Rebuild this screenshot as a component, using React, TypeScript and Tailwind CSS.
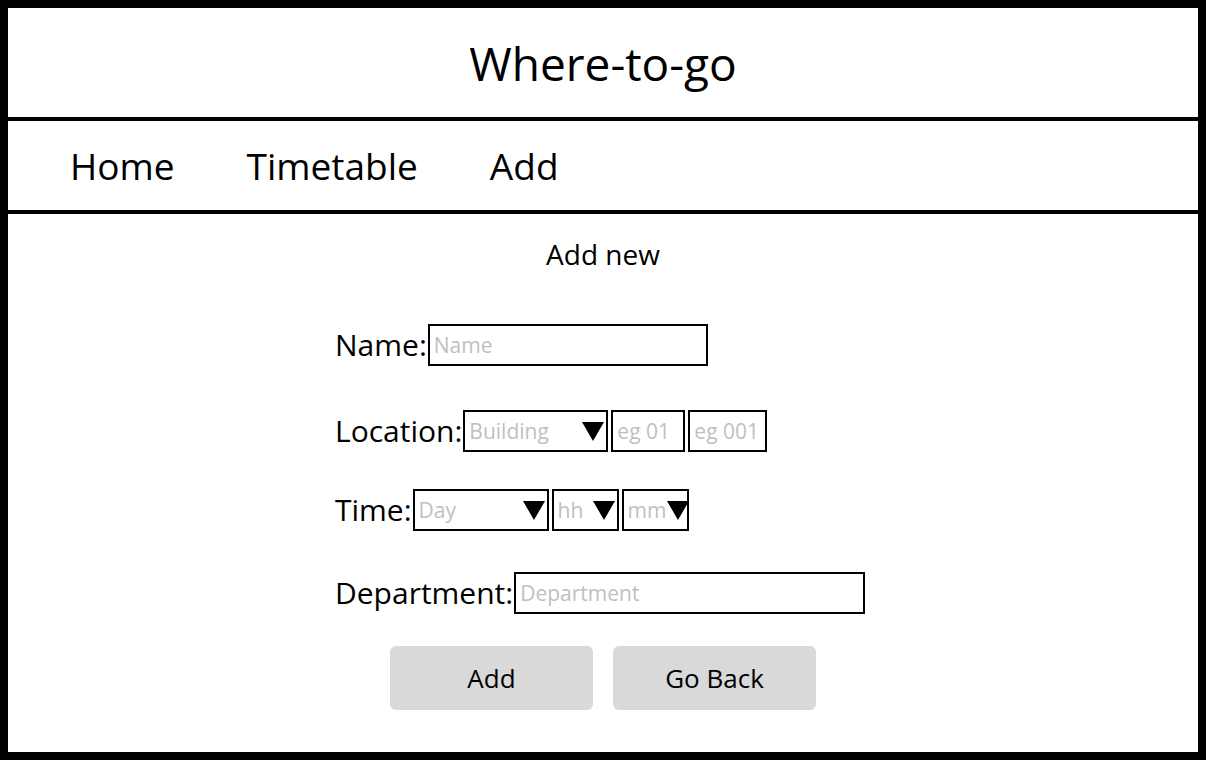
import React from "react";

const font = { fontFamily: '"Open Sans", "Noto Sans", sans-serif' };

const Arrow = () => (
   <svg width="22" height="19" viewBox="0 0 22 19" className="shrink-0">
      <polygon points="0,0 22,0 11,19" fill="#000" />
   </svg>
);

interface BoxProps {
   placeholder: string;
   width: string;
   select?: boolean;
}

const Box = ({ placeholder, width, select }: BoxProps) => (
   <div
      className={`${width} flex h-[42px] items-center justify-between border-2 border-black pl-[4px] pr-[2px]`}>
      <span className="text-[21px] leading-none whitespace-nowrap text-[#bfbfbf]">
         {placeholder}
      </span>
      {select && <Arrow />}
   </div>
);

const Row = ({
   label,
   className,
   children,
}: {
   label: string;
   className: string;
   children: React.ReactNode;
}) => (
   <div className={`flex items-center ${className}`}>
      <span className="text-[30px] leading-none text-black">{label}</span>
      <div className="ml-[1px] flex gap-[3px]">{children}</div>
   </div>
);

export default function App() {
   return (
      <div
         style={font}
         className="flex h-[760px] w-[1206px] flex-col border-8 border-black bg-white text-black">
         <header className="flex h-[113px] items-center justify-center border-b-4 border-black">
            <h1 className="text-[46px] leading-none">Where-to-go</h1>
         </header>

         <nav className="flex h-[93px] items-center gap-[72px] border-b-4 border-black pl-[62px] text-[37px]">
            <span>Home</span>
            <span>Timetable</span>
            <span>Add</span>
         </nav>

         <main className="flex flex-1 flex-col">
            <h2 className="mt-[20px] text-center text-[28px] leading-[40px]">
               Add new
            </h2>

            <div className="mx-auto w-[536px]">
               <Row label="Name:" className="mt-[50px]">
                  <Box placeholder="Name" width="w-[280px]" />
               </Row>
               <Row label="Location:" className="mt-[44px]">
                  <Box placeholder="Building" width="w-[145px]" select />
                  <Box placeholder="eg 01" width="w-[74px]" />
                  <Box placeholder="eg 001" width="w-[79px]" />
               </Row>
               <Row label="Time:" className="mt-[37px]">
                  <Box placeholder="Day" width="w-[136px]" select />
                  <Box placeholder="hh" width="w-[67px]" select />
                  <Box placeholder="mm" width="w-[67px]" select />
               </Row>
               <Row label="Department:" className="mt-[41px]">
                  <Box placeholder="Department" width="w-[351px]" />
               </Row>
            </div>

            <div className="mt-[32px] flex justify-center gap-[20px]">
               <button className="h-[64px] w-[203px] rounded-[6px] bg-[#d9d9d9] text-[26px]">
                  Add
               </button>
               <button className="h-[64px] w-[203px] rounded-[6px] bg-[#d9d9d9] text-[26px]">
                  Go Back
               </button>
            </div>
         </main>
      </div>
   );
}
